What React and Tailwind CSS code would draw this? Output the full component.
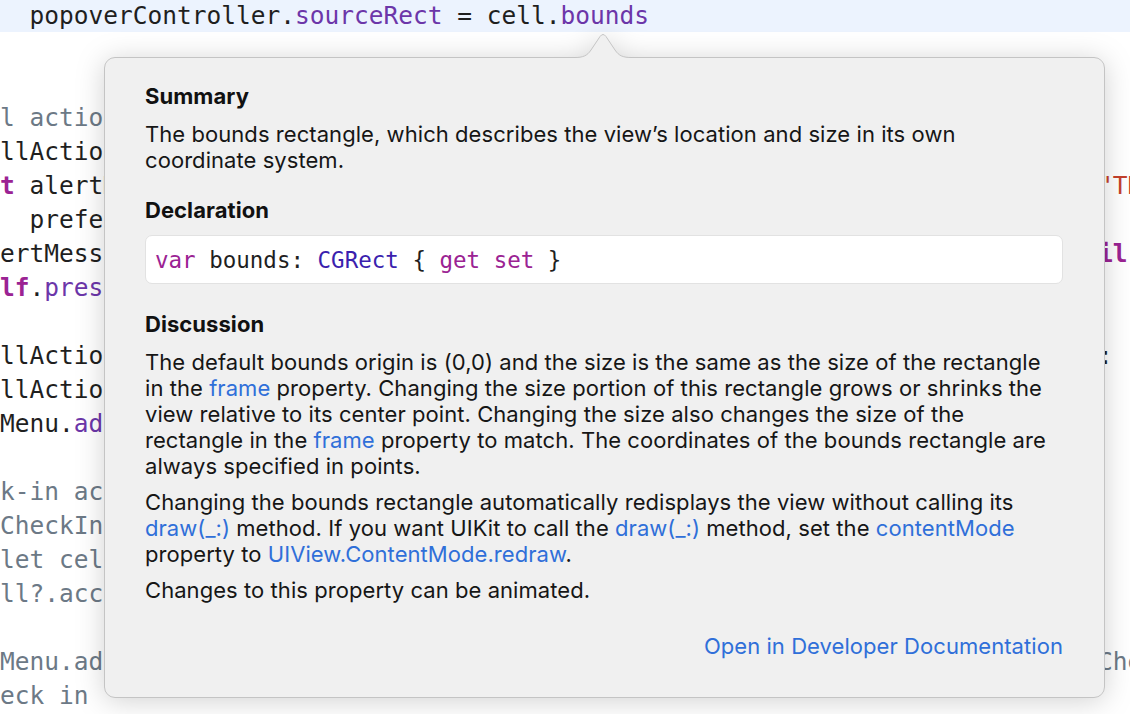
import React from "react";

// token colours, roughly Xcode's default light theme
const C = {
  plain: "text-[#1f1f1f]",
  kw: "text-[#9b2393] font-bold",
  prop: "text-[#6c36a9]",
  type: "text-[#3b1fae]",
  str: "text-[#c4402c]",
  gray: "text-[#6c7986]",
};

const lines = [
  { left: [] },
  { left: [] },
  { left: [["l action", C.gray]] },
  { left: [["llAction", C.plain]] },
  { left: [["t", C.kw], [" alertM", C.plain]], right: [["\"TH", C.str]] },
  { left: [["  prefer", C.plain]] },
  { left: [["ertMess", C.plain]], right: [["il", C.kw], [")", C.plain]] },
  { left: [["lf", C.kw], [".", C.plain], ["prese", C.prop]] },
  { left: [] },
  { left: [["llAction", C.plain]], right: [[":", C.plain]] },
  { left: [["llAction", C.plain]] },
  { left: [["Menu.", C.plain], ["add", C.prop]] },
  { left: [] },
  { left: [["k-in act", C.gray]] },
  { left: [["CheckIn", C.gray]] },
  { left: [["let cel", C.gray]] },
  { left: [["ll?.acc", C.gray]] },
  { left: [] },
  { left: [["Menu.add", C.gray]], right: [["Che", C.gray]] },
  { left: [["eck in", C.gray]] },
];

const Segs = ({ segs }) =>
  segs.map(([t, cls], i) => (
    <span key={i} className={cls}>
      {t}
    </span>
  ));

const Link = ({ children }) => <span className="text-[#2f6fd9]">{children}</span>;

const Heading = ({ children, className = "" }) => (
  <h3 className={"text-[22px] leading-[26px] font-bold text-[#111] " + className}>{children}</h3>
);

export default function App() {
  return (
    <div className="relative w-[1130px] h-[714px] overflow-hidden bg-white">
      {/* editor */}
      <div className="font-['DejaVu_Sans_Mono',monospace] text-[24.5px] whitespace-pre">
        <div className="h-[32px] leading-[32px] bg-[#ecf3fe] mb-[1px]">
          <Segs
            segs={[
              ["  popoverController.", C.plain],
              ["sourceRect", C.prop],
              [" = cell.", C.plain],
              ["bounds", C.prop],
            ]}
          />
        </div>
        {lines.map((l, i) => (
          <div key={i} className="flex h-[34px] leading-[34px]">
            <div className="w-[1098px] shrink-0 overflow-hidden">
              <Segs segs={l.left} />
            </div>
            <div className="overflow-hidden">{l.right && <Segs segs={l.right} />}</div>
          </div>
        ))}
      </div>

      {/* quick help popover */}
      <div className="absolute left-[104px] top-[57px] drop-shadow-[0_3px_14px_rgba(0,0,0,0.18)]">
        <div className="relative w-[1001px] h-[641px] rounded-[11px] border border-[#c4c4c4] bg-[#f0f0f0] pl-[40px] pr-[30px] pt-[25px] font-['Inter',sans-serif] text-[22px] leading-[26px] tracking-[0.06px] text-[#161616]">
          <svg
            className="absolute left-[469px] top-[-25px]"
            width="58"
            height="27"
            viewBox="0 0 58 27"
          >
            <path
              d="M0 24.5 C9 24.5 13 23 17 17 L26 3.5 Q29 -0.5 32 3.5 L41 17 C45 23 49 24.5 58 24.5 L58 27 L0 27 Z"
              fill="#f0f0f0"
            />
            <path
              d="M0 24.5 C9 24.5 13 23 17 17 L26 3.5 Q29 -0.5 32 3.5 L41 17 C45 23 49 24.5 58 24.5"
              fill="none"
              stroke="#c4c4c4"
              strokeWidth="1"
            />
          </svg>

          <Heading>Summary</Heading>
          <p className="mt-[12px]">
            The bounds rectangle, which describes the view’s location and size in its own
            <br />
            coordinate system.
          </p>

          <Heading className="mt-[24px]">Declaration</Heading>
          <div className="mt-[12px] mr-[11px] h-[49px] flex items-center rounded-[7px] border border-[#e2e2e2] bg-white pl-[9px] font-['DejaVu_Sans_Mono',monospace] text-[22.5px] tracking-normal">
            <span className="text-[#9b2393]">var</span>
            <span className="whitespace-pre text-[#1f1f1f]"> bounds: </span>
            <span className={C.type}>CGRect</span>
            <span className="whitespace-pre text-[#1f1f1f]"> {"{"} </span>
            <span className="text-[#9b2393]">get</span>
            <span className="whitespace-pre"> </span>
            <span className="text-[#9b2393]">set</span>
            <span className="whitespace-pre text-[#1f1f1f]"> {"}"}</span>
          </div>

          <Heading className="mt-[27px]">Discussion</Heading>
          <p className="mt-[12px] whitespace-nowrap">
            The default bounds origin is (0,0) and the size is the same as the size of the rectangle
            <br />
            in the <Link>frame</Link> property. Changing the size portion of this rectangle grows or
            shrinks the
            <br />
            view relative to its center point. Changing the size also changes the size of the
            <br />
            rectangle in the <Link>frame</Link> property to match. The coordinates of the bounds
            rectangle are
            <br />
            always specified in points.
          </p>
          <p className="mt-[10px] whitespace-nowrap">
            Changing the bounds rectangle automatically redisplays the view without calling its
            <br />
            <Link>draw(_:)</Link> method. If you want UIKit to call the <Link>draw(_:)</Link> method,
            set the <Link>contentMode</Link>
            <br />
            property to <Link>UIView.ContentMode.redraw</Link>.
          </p>
          <p className="mt-[10px]">Changes to this property can be animated.</p>

          <div className="mt-[30px] mr-[11px] flex justify-end">
            <Link>Open in Developer Documentation</Link>
          </div>
        </div>
      </div>
    </div>
  );
}
